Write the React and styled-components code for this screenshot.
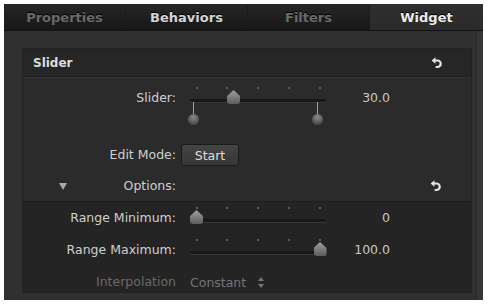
import React from "react";
import styled, { createGlobalStyle } from "styled-components";

const GlobalStyle = createGlobalStyle`
  body {
    margin: 0;
    background: #ffffff;
    font-family: "DejaVu Sans", "Liberation Sans", Arial, sans-serif;
  }
`;

const TABS = [
  { name: "Properties", tone: "dim" },
  { name: "Behaviors", tone: "on" },
  { name: "Filters", tone: "dim" },
  { name: "Widget", tone: "active" },
];

const tabColor = {
  dim: "#6a6a6a",
  on: "#d4d4d4",
  active: "#ececec",
};

const Frame = styled.div`
  margin: 4px 4px 4px 4px;
  width: 479px;
  height: 296px;
  background: #303030;
  display: flex;
  flex-direction: column;
  box-shadow: inset -6px 0 0 #363636, inset -7px 0 0 #2a2a2a;
  overflow: hidden;
`;

const TabBar = styled.div`
  display: flex;
  height: 26px;
  background: linear-gradient(#262626, #171717);
  border-bottom: 1px solid #121212;
`;

const Tab = styled.div`
  flex: ${(p) => (p.$tone === "active" ? "0 0 113px" : "1")};
  display: flex;
  align-items: center;
  justify-content: center;
  font-size: 13px;
  font-weight: bold;
  color: ${(p) => tabColor[p.$tone]};
  background: ${(p) =>
    p.$tone === "active" ? "linear-gradient(#2e2e2e, #2b2b2b)" : "transparent"};
  border-left: 1px solid #1c1c1c;
  text-shadow: 0 -1px 0 #000;
  &:first-child {
    border-left: none;
  }
`;

const Content = styled.div`
  flex: 1;
  padding: 17px 11px 7px 18px;
`;

const Panel = styled.div`
  height: 245px;
  width: 450px;
  box-sizing: border-box;
  background: #2b2b2b;
  border: 1px solid #222;
  overflow: hidden;
  display: flex;
  flex-direction: column;
`;

const Header = styled.div`
  height: 28px;
  flex: 0 0 28px;
  display: flex;
  align-items: center;
  justify-content: space-between;
  padding: 1px 28px 0 10px;
  box-sizing: border-box;
  background: #262626;
  border-bottom: 1px solid #1c1c1c;
  box-shadow: 0 1px 0 #353535;
  font-size: 12px;
  font-weight: bold;
  color: #dcdcdc;
`;

const Body = styled.div`
  padding-top: 8px;
  display: flex;
  flex-direction: column;
`;

const Row = styled.div`
  display: grid;
  grid-template-columns: 167px 136px 64px 1fr;
  align-items: ${(p) => (p.$top ? "start" : "center")};
  height: ${(p) => p.$h || 32}px;
  margin-top: ${(p) => p.$mt || 0}px;
  font-size: 12.5px;
  color: ${(p) => (p.$dim ? "#6a6a6a" : "#cfcfcf")};
`;

const Label = styled.div`
  display: flex;
  align-items: center;
  justify-content: space-between;
  padding-right: 14px;
  line-height: ${(p) => p.$lh || 16}px;
  white-space: nowrap;
`;

const LabelText = styled.span`
  margin-left: auto;
`;

const Disclosure = styled.span`
  margin-left: 36px;
  width: 0;
  height: 0;
  border-left: 4px solid transparent;
  border-right: 4px solid transparent;
  border-top: 7px solid #a8a8a8;
`;

const Value = styled.div`
  text-align: right;
  line-height: ${(p) => p.$lh || 16}px;
  color: #c8c8c8;
`;

const Lower = styled.div`
  margin-top: 4px;
  background: #242424;
  border-top: 1px solid #1e1e1e;
  flex: 1;
`;

const SliderBox = styled.div`
  position: relative;
  height: ${(p) => p.$h}px;
`;

const Track = styled.div`
  position: absolute;
  left: 0;
  right: 0;
  top: ${(p) => p.$y}px;
  height: 3px;
  border-radius: 2px;
  background: #181818;
  box-shadow: 0 1px 0 #383838;
`;

const Tick = styled.div`
  position: absolute;
  top: ${(p) => p.$y}px;
  width: 2px;
  height: 2px;
  margin-left: -1px;
  background: #5a5a5a;
`;

const Thumb = styled.div`
  position: absolute;
  top: ${(p) => p.$y}px;
  width: 13px;
  height: 14px;
  margin-left: -6.5px;
  background: linear-gradient(#a0a0a0, #5c5c5c);
  clip-path: polygon(50% 0, 100% 42%, 100% 100%, 0 100%, 0 42%);
  border-radius: 0 0 3px 3px;
`;

const Pin = styled.div`
  position: absolute;
  top: ${(p) => p.$y}px;
  width: 11px;
  height: 23px;
  margin-left: -5.5px;
  &::before {
    content: "";
    position: absolute;
    left: 5px;
    top: 0;
    width: 1px;
    height: 14px;
    background: #a0a0a0;
  }
  &::after {
    content: "";
    position: absolute;
    left: 0;
    top: 12px;
    width: 11px;
    height: 11px;
    border-radius: 50%;
    background: radial-gradient(circle at 50% 30%, #8c8c8c, #484848 75%);
  }
`;

const StartButton = styled.div`
  width: 58px;
  height: 22px;
  box-sizing: border-box;
  margin-left: -9px;
  display: flex;
  align-items: center;
  justify-content: center;
  border: 1px solid #1b1b1b;
  border-radius: 3px;
  background: linear-gradient(#444, #363636);
  color: #dedede;
`;

const Popup = styled.div`
  display: flex;
  align-items: center;
  gap: 12px;
  color: #747474;
  white-space: nowrap;
`;

const ResetWrap = styled.div`
  justify-self: end;
  margin-right: 29px;
  display: flex;
`;

const TICKS = [0, 0.25, 0.5, 0.75, 1];

function SliderControl({ value, max = 100, pins, h = 26, trackY = 14 }) {
  const pos = (v) => 6.5 + (v / max) * 123.5;
  return (
    <SliderBox $h={h}>
      {TICKS.map((t) => (
        <Tick key={t} $y={trackY - 12} style={{ left: pos(t * max) }} />
      ))}
      <Track $y={trackY} />
      {pins &&
        pins.map((p) => (
          <Pin key={p} $y={trackY + 3} style={{ left: pos(p) - 3 }} />
        ))}
      <Thumb $y={trackY - 9} style={{ left: pos(value) }} />
    </SliderBox>
  );
}

function ResetIcon() {
  return (
    <svg width="12" height="13" viewBox="0 0 12 13">
      <path
        d="M3.5 3.5 H6.5 A3.2 3.2 0 0 1 6.5 10 H5.5"
        fill="none"
        stroke="#e4e4e4"
        strokeWidth="2.2"
        strokeLinecap="round"
      />
      <path d="M4.5 0.2 L0.6 3.5 L4.5 6.8 Z" fill="#e4e4e4" />
    </svg>
  );
}

function UpDown() {
  return (
    <svg width="6" height="11" viewBox="0 0 6 11">
      <path d="M3 0 L6 4 H0 Z" fill="#747474" />
      <path d="M3 11 L6 7 H0 Z" fill="#747474" />
    </svg>
  );
}

export default function App() {
  return (
    <>
      <GlobalStyle />
      <Frame>
        <TabBar>
          {TABS.map((t) => (
            <Tab key={t.name} $tone={t.tone}>
              {t.name}
            </Tab>
          ))}
        </TabBar>
        <Content>
          <Panel>
            <Header>
              <span>Slider</span>
              <ResetIcon />
            </Header>
            <Body>
              <Row $top $h={50}>
                <Label $lh={26}>
                  <LabelText>Slider:</LabelText>
                </Label>
                <SliderControl value={30} pins={[0, 100]} h={50} trackY={14} />
                <Value $lh={26}>30.0</Value>
              </Row>
              <Row $h={24} $mt={8}>
                <Label>
                  <LabelText>Edit Mode:</LabelText>
                </Label>
                <StartButton>Start</StartButton>
              </Row>
              <Row $h={22} $mt={8}>
                <Label>
                  <Disclosure />
                  <LabelText>Options:</LabelText>
                </Label>
                <div />
                <div />
                <ResetWrap>
                  <ResetIcon />
                </ResetWrap>
              </Row>
            </Body>
            <Lower>
              <Row>
                <Label>
                  <LabelText>Range Minimum:</LabelText>
                </Label>
                <SliderControl value={0} h={32} trackY={17} />
                <Value>0</Value>
              </Row>
              <Row>
                <Label>
                  <LabelText>Range Maximum:</LabelText>
                </Label>
                <SliderControl value={100} h={32} trackY={17} />
                <Value>100.0</Value>
              </Row>
              <Row $dim>
                <Label>
                  <LabelText>Interpolation</LabelText>
                </Label>
                <Popup>
                  <span>Constant</span>
                  <UpDown />
                </Popup>
              </Row>
            </Lower>
          </Panel>
        </Content>
      </Frame>
    </>
  );
}
